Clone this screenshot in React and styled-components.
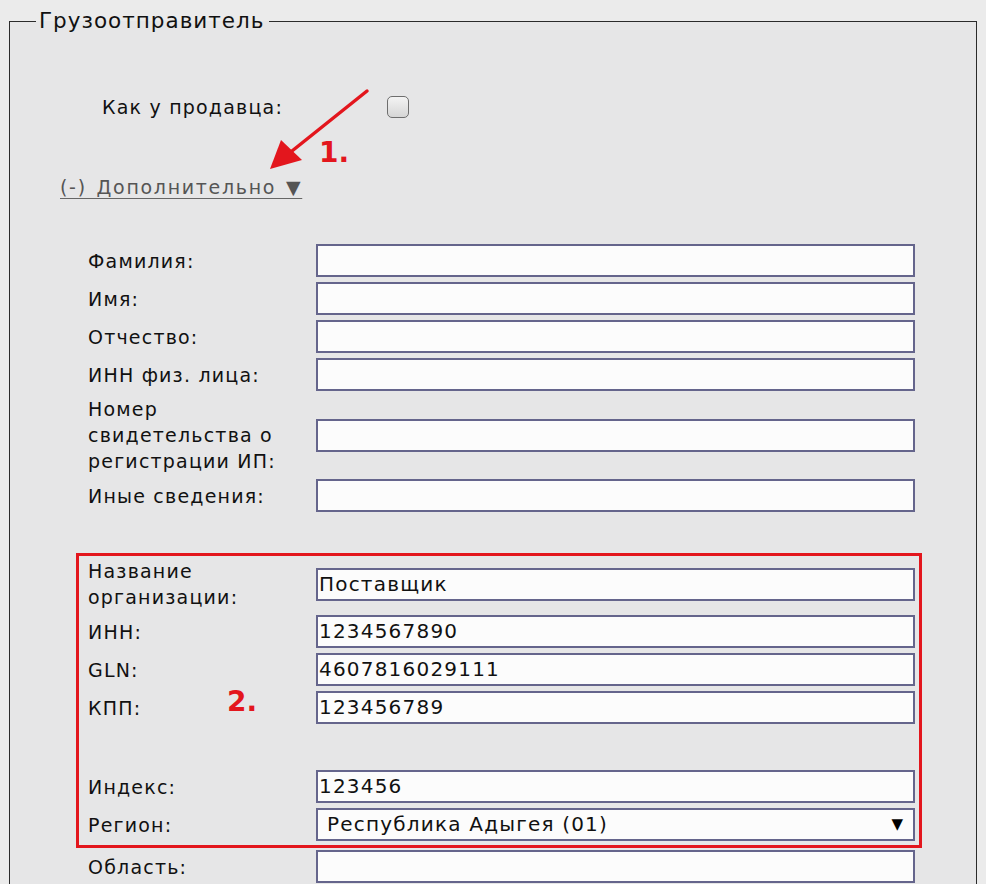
import React from "react";
import styled, { createGlobalStyle } from "styled-components";

const Global = createGlobalStyle`
  html, body { margin: 0; padding: 0; background: #e8e8e8; }
  body { font-family: "DejaVu Sans", Verdana, sans-serif; color: #111; }
  * { box-sizing: border-box; }
`;

const Page = styled.div`
  width: 986px;
  height: 884px;
  overflow: hidden;
  background: #ebebeb;
`;

const Fieldset = styled.fieldset`
  position: relative;
  margin: 8px 9px 0 9px;
  padding: 0 0 40px 0;
  border: 1px solid #2b2b2b;
  background: #e6e6e7;
  min-width: 0;
`;

const Legend = styled.legend`
  margin-left: 26px;
  padding: 0 5px 0 3px;
  font-size: 21.5px;
  letter-spacing: 1px;
  line-height: 26px;
  color: #111;
`;

const SameRow = styled.div`
  display: flex;
  align-items: center;
  margin-top: 61px;
  padding-left: 92px;
  height: 24px;
`;

const SameLabel = styled.span`
  width: 285px;
  font-size: 19px;
  letter-spacing: 1.2px;
  line-height: 24px;
`;

const Checkbox = styled.span`
  display: inline-block;
  width: 22px;
  height: 22px;
  border: 1.5px solid #6e6e6e;
  border-radius: 5px;
  background: linear-gradient(#f4f4f4, #d6d6d6);
`;

const MoreLink = styled.a`
  display: inline-block;
  margin-top: 56px;
  margin-left: 50px;
  font-size: 19px;
  letter-spacing: 1.7px;
  word-spacing: 2px;
  line-height: 24px;
  color: #555;
  text-decoration: underline;
  text-underline-offset: 4px;
  text-decoration-color: #666;
`;

const Grid = styled.div`
  display: grid;
  grid-template-columns: 228px 599px;
  row-gap: 5px;
  align-items: center;
  margin-top: ${(p) => p.$top || 0}px;
  padding-left: ${(p) => (p.$inner ? 0 : 78)}px;
`;

const Label = styled.div`
  font-size: 19px;
  letter-spacing: 1.2px;
  line-height: 26px;
  color: #111;
`;

const Input = styled.div`
  height: 33px;
  border: 2px solid #65658c;
  background: #fcfcfc;
  font-family: "DejaVu Sans", Verdana, sans-serif;
  font-size: 20px;
  letter-spacing: 1.2px;
  line-height: 29px;
  padding-left: ${(p) => (p.$select ? 9 : 1)}px;
  padding-right: 10px;
  color: #111;
  display: flex;
  align-items: center;
  justify-content: space-between;
`;

const Spacer = styled.div`
  grid-column: 1 / span 2;
  height: 36px;
`;

const RedBox = styled.div`
  position: relative;
  margin: 41px 0 0 66px;
  width: 846px;
  border: 3px solid #e3161d;
  padding: 2px 4px 4px 9px;
`;

const Caret = styled.span`
  font-size: 15px;
  letter-spacing: 0;
  color: #000;
`;

const Note = styled.span`
  position: absolute;
  left: ${(p) => p.$x}px;
  top: ${(p) => p.$y}px;
  font-family: "DejaVu Sans", Verdana, sans-serif;
  font-weight: bold;
  font-size: 28px;
  line-height: 30px;
  color: #e3161d;
`;

const ArrowSvg = styled.svg`
  position: absolute;
  left: 0;
  top: 0;
  pointer-events: none;
`;

const rows1 = ["Фамилия:", "Имя:", "Отчество:", "ИНН физ. лица:"];

export default function App() {
  return (
    <Page>
      <Global />
      <Fieldset>
        <Legend>Грузоотправитель</Legend>
        <SameRow>
          <SameLabel>Как у продавца:</SameLabel>
          <Checkbox />
        </SameRow>
        <MoreLink>(-) Дополнительно ▼</MoreLink>

        <Grid $top={45}>
          {rows1.map((l) => (
            <React.Fragment key={l}>
              <Label>{l}</Label>
              <Input />
            </React.Fragment>
          ))}
          <Label>
            Номер
            <br />
            свидетельства о
            <br />
            регистрации ИП:
          </Label>
          <Input />
          <Label>Иные сведения:</Label>
          <Input />
        </Grid>

        <RedBox>
          <Grid $inner>
            <Label>
              Название
              <br />
              организации:
            </Label>
            <Input>Поставщик</Input>
            <Label>ИНН:</Label>
            <Input>1234567890</Input>
            <Label>GLN:</Label>
            <Input>4607816029111</Input>
            <Label>КПП:</Label>
            <Input>123456789</Input>
            <Spacer />
            <Label>Индекс:</Label>
            <Input>123456</Input>
            <Label>Регион:</Label>
            <Input $select>
              <span>Республика Адыгея (01)</span>
              <Caret>▼</Caret>
            </Input>
          </Grid>
        </RedBox>

        <Grid $top={2}>
          <Label>Область:</Label>
          <Input />
        </Grid>

        <Note $x={309} $y={104}>1.</Note>
        <Note $x={217} $y={653}>2.</Note>
        <ArrowSvg width="400" height="200" viewBox="0 0 400 200">
          <line x1="357" y1="57" x2="282" y2="117" stroke="#e3161d" strokeWidth="3.5" strokeLinecap="round" />
          <polygon points="260,135 271,106 292,126" fill="#e3161d" />
        </ArrowSvg>
      </Fieldset>
    </Page>
  );
}
